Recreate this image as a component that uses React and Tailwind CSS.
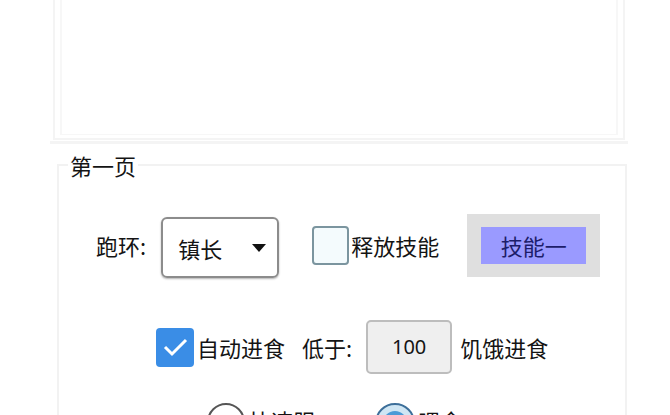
export default function App() {
  const font = { fontFamily: '"Noto Sans CJK SC", "Noto Sans", sans-serif' };
  return (
    <div className="w-[670px] h-[415px] overflow-hidden bg-white text-[#141414]" style={font}>
      {/* top panel */}
      <div className="ml-[53px] w-[572px] h-[140px] border-x-2 border-b-2 border-[#f4f4f4] px-[5px] pb-[3px]">
        <div className="h-full border-x-2 border-b border-[#f7f7f7]" />
      </div>
      <div className="ml-[50px] w-[578px] h-[3px] mt-[1px] bg-[#f4f4f4]" />

      {/* group box */}
      <div className="ml-[57px] mt-[20px] w-[570px] h-[260px] border-t-2 border-l-2 border-r-2 border-[#f2f2f2]">
        <div className="-mt-[15px] ml-[9px] w-fit bg-white px-[2px] text-[22px] leading-[28px]">第一页</div>

        {/* row 1 */}
        <div className="mt-[34px] flex items-center h-[64px]">
          <span className="ml-[37px] text-[22px] leading-none">跑环:</span>
          <div className="ml-[15px] mt-[5px] w-[118px] h-[61px] rounded-[6px] border-2 border-[#8c8c8c] shadow-[0_1px_2px_rgba(0,0,0,0.3)] flex items-center pl-[15px] pr-[10px]">
            <span className="text-[22px] leading-none">镇长</span>
            <svg className="ml-auto" width="16" height="10" viewBox="0 0 16 10">
              <path d="M1 1 L15 1 L8 9 Z" fill="#111" />
            </svg>
          </div>
          <div className="ml-[33px] w-[37px] h-[39px] rounded-[4px] border-2 border-[#7b959f] bg-[#f4fbfd]" />
          <span className="ml-[2px] text-[22px] leading-none">释放技能</span>
          <div className="ml-[28px] w-[133px] h-[63px] bg-[#dfdfdf] flex items-center justify-center">
            <div className="w-[105px] h-[37px] bg-[#9a9aff] flex items-center justify-center text-[22px] leading-none text-[#1d1d6a]">技能一</div>
          </div>
        </div>

        {/* row 2 */}
        <div className="mt-[42px] flex items-center h-[56px]">
          <div className="ml-[97px] w-[38px] h-[39px] rounded-[4px] bg-[#3a8de6] flex items-center justify-center">
            <svg width="28" height="22" viewBox="0 0 28 22">
              <path d="M4 11 L11 18 L25 4" fill="none" stroke="white" strokeWidth="3" />
            </svg>
          </div>
          <span className="ml-[3px] text-[22px] leading-none">自动进食</span>
          <span className="ml-[17px] text-[22px] leading-none">低于:</span>
          <div className="ml-[14px] w-[86px] h-[54px] rounded-[5px] border-2 border-[#bdbdbd] bg-[#efefef] flex items-center justify-center text-[20px] leading-none" style={{ fontFamily: '"Noto Sans", sans-serif' }}>100</div>
          <span className="ml-[8px] text-[22px] leading-none">饥饿进食</span>
        </div>

        {/* row 3 */}
        <div className="mt-[28px] flex items-start h-[40px]">
          <div className="ml-[148px] w-[38px] h-[38px] rounded-full border-2 border-[#555] bg-white" />
          <span className="ml-[4px] mt-[6px] text-[22px] leading-none">快速服</span>
          <div className="ml-[60px] w-[40px] h-[40px] rounded-full border-2 border-[#3d6f9a] bg-[#cfe6f4] flex items-center justify-center">
            <div className="w-[24px] h-[24px] rounded-full bg-[#4c9bd6]" />
          </div>
          <span className="ml-[3px] mt-[6px] text-[22px] leading-none">喂食</span>
        </div>
      </div>
    </div>
  );
}
